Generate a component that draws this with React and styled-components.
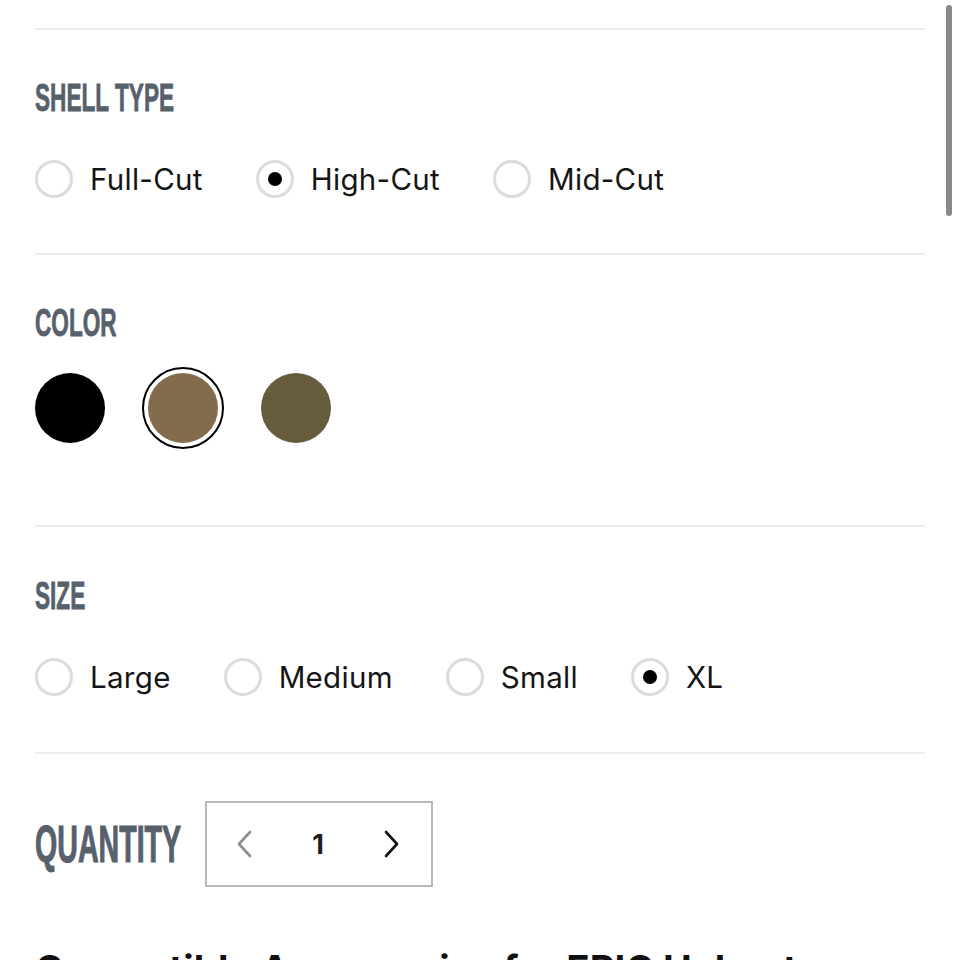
import React, { useState } from "react";
import styled, { createGlobalStyle } from "styled-components";

const GlobalStyle = createGlobalStyle`
  html, body {
    margin: 0;
    padding: 0;
    background: #ffffff;
    overflow: hidden;
  }
  body {
    font-family: "Inter", "Noto Sans", sans-serif;
    color: #111111;
  }
`;

const Page = styled.div`
  padding: 28px 35px 0;
  height: 960px;
  box-sizing: border-box;
  overflow: hidden;
`;

const Divider = styled.div`
  height: 2px;
  background: #ececec;
`;

const Section = styled.section`
  padding: ${({ $pad }) => $pad || "48px 0 55px"};
`;

const Heading = styled.h3`
  margin: 0;
  display: block;
  width: 240px;
  font-family: "Liberation Sans", Arial, sans-serif;
  font-weight: 700;
  font-size: ${({ $size }) => $size || 39}px;
  line-height: 1;
  height: ${({ $size }) => $size || 39}px;
  color: #57616c;
  -webkit-text-stroke: 0.8px #57616c;
  transform: scaleX(${({ $scale }) => $scale || 0.58});
  transform-origin: left center;
  white-space: nowrap;
`;

const RadioRow = styled.div`
  display: flex;
  align-items: center;
  gap: 53px;
  margin-top: ${({ $top }) => $top || 43}px;
`;

const RadioItem = styled.label`
  display: flex;
  align-items: center;
  gap: 17px;
  font-size: 29.5px;
  letter-spacing: 0.3px;
  line-height: 38px;
  color: #151515;
  cursor: pointer;
`;

const RadioCircle = styled.span`
  width: 38px;
  height: 38px;
  box-sizing: border-box;
  border: 3.5px solid #dcdcdc;
  border-radius: 50%;
  display: flex;
  align-items: center;
  justify-content: center;
  flex-shrink: 0;

  &::after {
    content: "";
    width: 14px;
    height: 14px;
    border-radius: 50%;
    background: #000;
    display: ${({ $checked }) => ($checked ? "block" : "none")};
  }
`;

const SwatchRow = styled.div`
  display: flex;
  align-items: center;
  gap: 37px;
  height: 82px;
  margin-top: 25px;
`;

const Swatch = styled.button`
  width: ${({ $selected }) => ($selected ? 82 : 70)}px;
  height: ${({ $selected }) => ($selected ? 82 : 70)}px;
  padding: 0;
  border-radius: 50%;
  background: transparent;
  border: ${({ $selected }) => ($selected ? "2.5px solid #000" : "none")};
  display: flex;
  align-items: center;
  justify-content: center;
  cursor: pointer;
  box-sizing: border-box;

  &::after {
    content: "";
    width: 70px;
    height: 70px;
    flex-shrink: 0;
    border-radius: 50%;
    background: ${({ $color }) => $color};
  }
`;

const QuantityRow = styled.div`
  display: flex;
  align-items: center;
  gap: 24px;
`;

const QtyLabel = styled(Heading)`
  width: 146px;
  height: auto;
  margin-right: -120px;
  -webkit-text-stroke: 1.1px #57616c;
`;

const Stepper = styled.div`
  width: 228px;
  height: 86px;
  box-sizing: border-box;
  border: 2px solid #b8b8b8;
  display: flex;
  align-items: center;
  justify-content: space-between;
  padding: 0 30px 0 28px;
  margin-left: 120px;
`;

const StepButton = styled.button`
  background: none;
  border: none;
  padding: 0;
  display: flex;
  cursor: pointer;
  color: ${({ $muted }) => ($muted ? "#8c8c8c" : "#111")};
`;

const QtyValue = styled.span`
  font-size: 27px;
  font-weight: 700;
  color: #1e1e1e;
`;

const Accessories = styled.h2`
  margin: 63px 0 0;
  font-family: "Inter", "Noto Sans", sans-serif;
  font-weight: 700;
  font-size: 38.5px;
  line-height: 1;
  color: #111;
  white-space: nowrap;
`;

const Scrollbar = styled.div`
  position: fixed;
  top: 5px;
  right: 8px;
  width: 6px;
  height: 211px;
  border-radius: 3px;
  background: #8a8a8a;
`;

const Chevron = ({ dir }) => (
  <svg width="18" height="30" viewBox="0 0 18 30" fill="none">
    <path
      d={dir === "left" ? "M15 3 L4 15 L15 27" : "M3 3 L14 15 L3 27"}
      stroke="currentColor"
      strokeWidth="2.6"
      strokeLinecap="round"
      strokeLinejoin="round"
    />
  </svg>
);

const RadioGroup = ({ options, value, onChange, top }) => (
  <RadioRow $top={top}>
    {options.map((opt) => (
      <RadioItem key={opt} onClick={() => onChange(opt)}>
        <RadioCircle $checked={value === opt} />
        {opt}
      </RadioItem>
    ))}
  </RadioRow>
);

const colors = [
  { name: "Black", value: "#000000" },
  { name: "Coyote", value: "#836c4e" },
  { name: "Ranger Green", value: "#665b3c" },
];

export default function App() {
  const [shell, setShell] = useState("High-Cut");
  const [color, setColor] = useState("Coyote");
  const [size, setSize] = useState("XL");
  const [qty, setQty] = useState(1);

  return (
    <>
      <GlobalStyle />
      <Scrollbar />
      <Page>
        <Divider />
        <Section>
          <Heading>SHELL TYPE</Heading>
          <RadioGroup
            options={["Full-Cut", "High-Cut", "Mid-Cut"]}
            value={shell}
            onChange={setShell}
          />
        </Section>
        <Divider />
        <Section $pad="48px 0 76px">
          <Heading>COLOR</Heading>
          <SwatchRow>
            {colors.map((c) => (
              <Swatch
                key={c.name}
                aria-label={c.name}
                $color={c.value}
                $selected={color === c.name}
                onClick={() => setColor(c.name)}
              />
            ))}
          </SwatchRow>
        </Section>
        <Divider />
        <Section $pad="49px 0 56px">
          <Heading>SIZE</Heading>
          <RadioGroup
            options={["Large", "Medium", "Small", "XL"]}
            value={size}
            onChange={setSize}
            top={43}
          />
        </Section>
        <Divider />
        <Section $pad="47px 0 0">
          <QuantityRow>
            <QtyLabel $size={52} $scale={0.55}>
              QUANTITY
            </QtyLabel>
            <Stepper>
              <StepButton $muted onClick={() => setQty(Math.max(1, qty - 1))}>
                <Chevron dir="left" />
              </StepButton>
              <QtyValue>{qty}</QtyValue>
              <StepButton onClick={() => setQty(qty + 1)}>
                <Chevron dir="right" />
              </StepButton>
            </Stepper>
          </QuantityRow>
          <Accessories>Compatible Accessories for EPIC Helmets</Accessories>
        </Section>
      </Page>
    </>
  );
}
